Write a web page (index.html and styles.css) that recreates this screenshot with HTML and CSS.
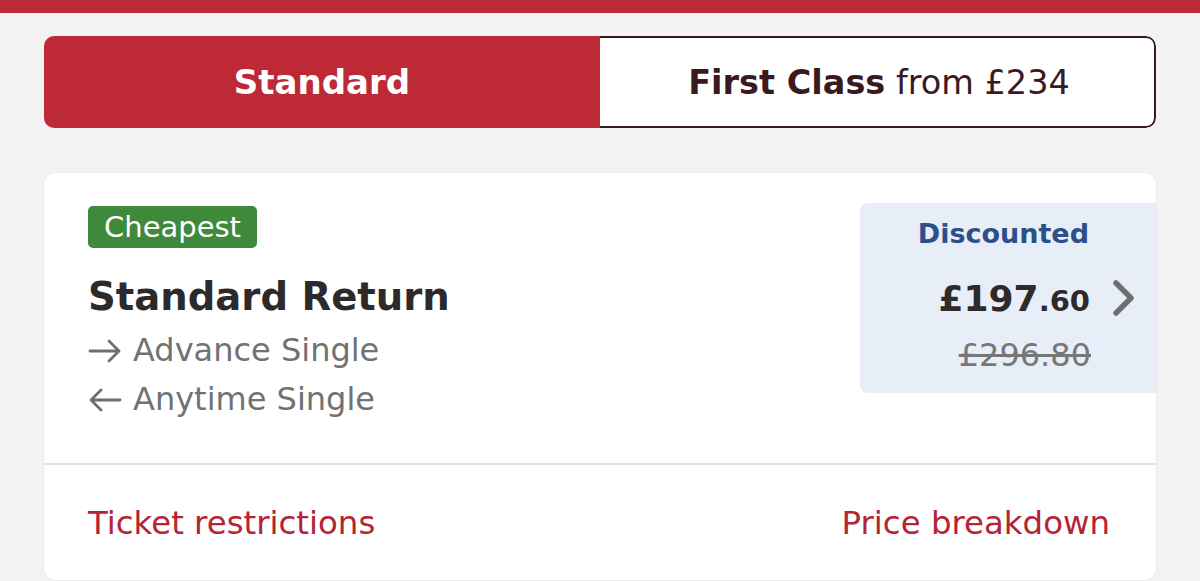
FILE: index.html
```html
<!DOCTYPE html>
<html lang="en">
<head>
<meta charset="utf-8">
<title>Tickets</title>
<link rel="stylesheet" href="styles.css">
</head>
<body>
<div class="topbar"></div>
<div class="toggle">
  <div class="tab tab-active">Standard</div>
  <div class="tab tab-other"><b>First Class</b>&nbsp;from £234</div>
</div>
<div class="card">
  <div class="card-main">
    <div class="info">
      <span class="badge">Cheapest</span>
      <div class="title">Standard Return</div>
      <div class="leg leg-first"><svg class="arrow" width="34" height="24" viewBox="0 0 34 24"><path d="M2 12 H31 M21 2 L31 12 L21 22" fill="none" stroke="#6f6f6f" stroke-width="2.8" stroke-linecap="round" stroke-linejoin="round"/></svg>Advance Single</div>
      <div class="leg"><svg class="arrow" width="34" height="24" viewBox="0 0 34 24"><path d="M32 12 H3 M13 2 L3 12 L13 22" fill="none" stroke="#6f6f6f" stroke-width="2.8" stroke-linecap="round" stroke-linejoin="round"/></svg>Anytime Single</div>
    </div>
    <div class="price-box">
      <div class="price-label">Discounted</div>
      <div class="price-row">
        <span class="price"><span class="pounds">£197</span><span class="pence">.60</span></span>
        <svg class="chev" width="26" height="38" viewBox="0 0 26 38"><path d="M5 4 L20 19 L5 34" fill="none" stroke="#6e6e6e" stroke-width="5.5" stroke-linecap="round" stroke-linejoin="round"/></svg>
      </div>
      <div class="old-price">£296.80</div>
    </div>
  </div>
  <div class="card-foot">
    <a class="link">Ticket restrictions</a>
    <a class="link">Price breakdown</a>
  </div>
</div>
</body>
</html>
```
FILE: styles.css
```css
html, body { margin: 0; padding: 0; }
body {
  background: #f3f3f3;
  font-family: "DejaVu Sans", "Liberation Sans", sans-serif;
  width: 1200px;
  height: 581px;
  overflow: hidden;
}
.topbar { height: 13px; background: #bd2935; }
.toggle {
  display: flex;
  margin: 23px 44px 0;
  height: 92px;
  border-radius: 10px;
  overflow: hidden;
}
.tab {
  flex: 0 0 50%;
  box-sizing: border-box;
  display: flex;
  align-items: center;
  justify-content: center;
  font-size: 34px;
}
.tab-active {
  background: #bd2935;
  color: #fff;
  font-weight: 700;
}
.tab-other {
  background: #fff;
  color: #3a1a1f;
  border: 2px solid #3a1a1f;
  border-left: none;
  border-radius: 0 10px 10px 0;
  padding-left: 4px;
  font-size: 33.5px;
}
.tab-other b { font-weight: 700; }
.card {
  margin: 45px 44px 0;
  background: #fff;
  border-radius: 12px;
  height: 407px;
  box-shadow: 0 0 0 1px #ececec;
}
.card-main {
  display: flex;
  justify-content: space-between;
  height: 292px;
  border-bottom: 2px solid #e4e4e4;
  box-sizing: border-box;
}
.info { padding: 33px 0 0 44px; display: flex; flex-direction: column; align-items: flex-start; }
.badge {
  background: #3f8a3a;
  color: #fff;
  font-size: 29px;
  line-height: 42px;
  padding: 0 16px;
  border-radius: 5px;
}
.title {
  margin-top: 22px;
  font-size: 38.6px;
  font-weight: 700;
  color: #2e2a2b;
  line-height: 54px;
}
.leg {
  display: flex;
  align-items: center;
  font-size: 32px;
  color: #727272;
  line-height: 49px;
}
.leg-first { margin-top: 2px; }
.arrow { margin-right: 11px; }
.price-box {
  margin-top: 30px;
  width: 296px;
  height: 190px;
  background: #e8eef7;
  border-radius: 8px 0 0 8px;
  display: flex;
  flex-direction: column;
  align-items: flex-end;
  padding-right: 67px;
  box-sizing: border-box;
}
.price-label {
  margin-top: 12px;
  color: #2c4f8a;
  font-size: 27px;
  font-weight: 600;
  line-height: 38px;
}
.price-row {
  display: flex;
  align-items: center;
  margin-right: -48px;
  margin-top: 19px;
  height: 52px;
}
.price { color: #2e2a2b; }
.pounds { font-size: 36px; font-weight: 700; }
.pence { font-size: 29px; font-weight: 600; }
.chev { margin-left: 21px; }
.old-price {
  color: #777;
  font-size: 32px;
  text-decoration: line-through;
  line-height: 40px;
  margin-top: 11px;
  margin-right: -2px;
}
.card-foot {
  display: flex;
  justify-content: space-between;
  padding: 0 46px 0 44px;
  height: 116px;
  align-items: center;
}
.link {
  color: #b52434;
  font-size: 32.4px;
}
```
